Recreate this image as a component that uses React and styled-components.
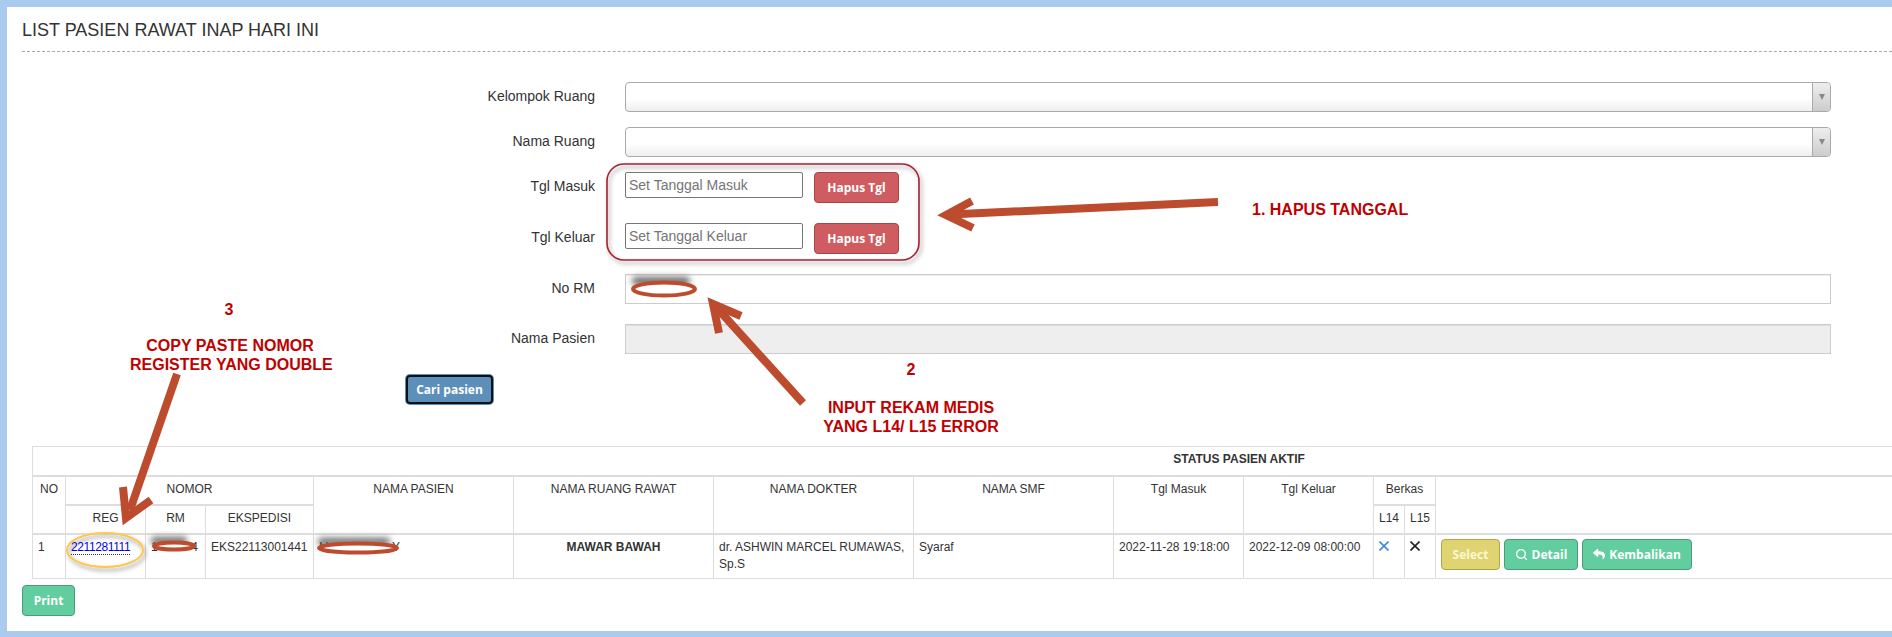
import React from "react";
import styled, { createGlobalStyle } from "styled-components";
import { Search } from "lucide-react";
import { FaReply } from "react-icons/fa";

const GlobalStyle = createGlobalStyle`
  html, body {
    margin: 0;
    padding: 0;
    overflow: hidden;
    background: #abcbee;
  }
  * {
    box-sizing: border-box;
  }
`;

const Page = styled.div`
  position: relative;
  width: 1892px;
  height: 637px;
  padding: 7px 0 6px 7px;
  overflow: hidden;
  background: #abcbee;
  font-family: "Liberation Sans", Arial, sans-serif;
  color: #333;
`;

const Panel = styled.main`
  height: 100%;
  padding-left: 15px;
  overflow: hidden;
  background: #fff;
`;

const Title = styled.h3`
  margin: 0 0 30px;
  padding: 13px 0 11px;
  border-bottom: 1px dashed #aaa;
  font-size: 18px;
  line-height: 20px;
  font-weight: 400;
  color: #333;
`;

const Form = styled.form`
  display: flex;
  flex-direction: column;
`;

const Row = styled.div`
  display: grid;
  grid-template-columns: 573px 1206px;
  column-gap: 30px;
  margin-bottom: ${(p) => p.$gap}px;
`;

const Label = styled.label`
  padding-top: 4px;
  font-size: 14px;
  line-height: 20px;
  text-align: right;
  color: #333;
`;

const SelectBox = styled.div`
  display: flex;
  justify-content: flex-end;
  height: 30px;
  border: 1px solid #aaa;
  border-radius: 4px;
  background: linear-gradient(to bottom, #fff 0%, #fff 55%, #eee 100%);
`;

const SelectArrow = styled.span`
  display: flex;
  align-items: center;
  justify-content: center;
  width: 18px;
  border-left: 1px solid #aaa;
  border-radius: 0 4px 4px 0;
  background: linear-gradient(to bottom, #eee 0%, #ccc 100%);

  &::after {
    content: "";
    border-left: 3px solid transparent;
    border-right: 3px solid transparent;
    border-top: 6px solid #888;
  }
`;

const DateRow = styled.div`
  display: flex;
  align-items: flex-start;
  gap: 11px;
`;

const DateInput = styled.input`
  width: 178px;
  height: 26px;
  padding: 0 3px;
  border: 1px solid #767676;
  border-radius: 2px;
  background: #fff;
  font-family: "Liberation Sans", Arial, sans-serif;
  font-size: 14px;

  &::placeholder {
    color: #757575;
    opacity: 1;
  }
`;

const TextInput = styled.input`
  display: block;
  width: 100%;
  height: 30px;
  border: 1px solid #ccc;
  background: ${(p) => (p.disabled ? "#eee" : "#fff")};
  box-shadow: inset 0 1px 1px rgba(0, 0, 0, 0.075);
`;

const tones = {
  red: ["#cf5c60", "#a94447", "#fff"],
  green: ["#62cd9f", "#4a9c79", "#fff"],
  yellow: ["#e0d371", "#b0a54f", "#fbf7d5"],
};

const Btn = styled.button`
  display: inline-flex;
  align-items: center;
  justify-content: center;
  gap: 4px;
  width: ${(p) => p.$width}px;
  height: 31px;
  padding: 0;
  border: 1px solid ${(p) => tones[p.$tone][1]};
  border-radius: 4px;
  background: ${(p) => tones[p.$tone][0]};
  color: ${(p) => tones[p.$tone][2]};
  font-family: "Open Sans", sans-serif;
  font-size: 12px;
  font-weight: 700;
`;

const CariButton = styled.button`
  align-self: flex-start;
  width: 87px;
  height: 29px;
  margin: 1px 0 42px 384px;
  padding: 0;
  border: 2px solid #111;
  border-radius: 4px;
  background: #5c8fba;
  box-shadow: 0 0 0 1px #5c8fba;
  color: #fff;
  font-family: "Open Sans", sans-serif;
  font-size: 12px;
  font-weight: 700;
`;

const Table = styled.table`
  table-layout: fixed;
  width: 2413px;
  margin-left: 10px;
  border-collapse: collapse;
  font-size: 12px;
  line-height: 17px;
  color: #333;
`;

const Th = styled.th`
  height: ${(p) => p.$height || 29}px;
  padding: 4px 5px;
  border: 1px solid #ddd;
  border-bottom-width: 2px;
  vertical-align: top;
  text-align: center;
  font-weight: ${(p) => (p.$bold ? 700 : 400)};
`;

const Td = styled.td`
  height: 45px;
  padding: 4px 5px;
  border: 1px solid #ddd;
  vertical-align: top;
  text-align: ${(p) => (p.$center ? "center" : "left")};
  font-weight: ${(p) => (p.$bold ? 700 : 400)};
`;

const RegLink = styled.a`
  border-bottom: 1px dotted #333;
  color: #0000ee;
  letter-spacing: -0.4px;
`;

// what is left readable of a value the screenshot has scribbled over
const Redacted = styled.div`
  display: flex;
  justify-content: space-between;
  width: ${(p) => p.$width}px;
`;

const Actions = styled.div`
  display: flex;
  gap: 4px;
`;

const CrossIcon = styled.svg`
  display: block;
  width: 10px;
  height: 10px;
  margin-top: 2px;
  stroke: ${(p) => p.$color};
  stroke-width: 1.6;
`;

const PrintRow = styled.div`
  margin-top: 6px;
`;

const Overlay = styled.svg`
  position: absolute;
  top: 0;
  left: 0;
  width: 1892px;
  height: 637px;
  pointer-events: none;
`;

const Callout = styled.div`
  position: absolute;
  top: ${(p) => p.$y}px;
  left: ${(p) => p.$x}px;
  width: ${(p) => p.$w}px;
  font-size: ${(p) => p.$size || 16}px;
  line-height: 19px;
  font-weight: 700;
  text-align: center;
  white-space: nowrap;
  color: #c00000;
  pointer-events: none;
`;

const Cross = ({ color }) => (
  <CrossIcon $color={color} viewBox="0 0 10 10" fill="none">
    <path d="M0.5 0.5L9.5 9.5M9.5 0.5L0.5 9.5" />
  </CrossIcon>
);

const Arrow = ({ shaft, head }) => (
  <g fill="none" stroke="#bd4b2e" strokeWidth="8" strokeMiterlimit="10">
    <path d={shaft} />
    <path d={head} />
  </g>
);

const Annotations = () => (
  <Overlay viewBox="0 0 1892 637">
    <defs>
      <filter id="soft" x="-30%" y="-60%" width="160%" height="220%">
        <feDropShadow dx="2" dy="3" stdDeviation="2" floodColor="#000" floodOpacity="0.4" />
      </filter>
      <filter id="smudge" x="-30%" y="-100%" width="160%" height="300%">
        <feGaussianBlur stdDeviation="3" />
      </filter>
    </defs>

    <rect x="607" y="164" width="312" height="96" rx="17" fill="none" stroke="#a5202f" strokeWidth="1.6" filter="url(#soft)" />
    <Arrow shaft="M1218 202L950 214.5" head="M972 201L946 215L973 228" />

    <rect x="632" y="277" width="58" height="8" rx="4" fill="#666" filter="url(#smudge)" />
    <ellipse cx="664" cy="289" rx="31" ry="6.5" fill="#fff" stroke="#bd4b2e" strokeWidth="4" />
    <Arrow shaft="M803 403L716 307" head="M741 316L713 304L719 333" />

    <Arrow shaft="M177 374L130 510" head="M123 487L126 518L151 500" />
    <ellipse cx="105" cy="550" rx="38" ry="17" fill="none" stroke="#fcc84f" strokeWidth="2" filter="url(#soft)" />

    <rect x="151" y="537" width="36" height="7" rx="3" fill="#666" filter="url(#smudge)" />
    <ellipse cx="174" cy="546" rx="20" ry="3.5" fill="#fff" stroke="#bd4b2e" strokeWidth="4" />

    <rect x="318" y="538" width="72" height="7" rx="3" fill="#666" filter="url(#smudge)" />
    <ellipse cx="358" cy="548" rx="39" ry="4.5" fill="#fff" stroke="#bd4b2e" strokeWidth="4" />
  </Overlay>
);

export default function App() {
  return (
    <Page>
      <GlobalStyle />
      <Panel>
        <Title>LIST PASIEN RAWAT INAP HARI INI</Title>
        <Form>
          <Row $gap={15}>
            <Label>Kelompok Ruang</Label>
            <SelectBox>
              <SelectArrow />
            </SelectBox>
          </Row>
          <Row $gap={15}>
            <Label>Nama Ruang</Label>
            <SelectBox>
              <SelectArrow />
            </SelectBox>
          </Row>
          <Row $gap={20}>
            <Label>Tgl Masuk</Label>
            <DateRow>
              <DateInput placeholder="Set Tanggal Masuk" />
              <Btn type="button" $tone="red" $width={85}>Hapus Tgl</Btn>
            </DateRow>
          </Row>
          <Row $gap={20}>
            <Label>Tgl Keluar</Label>
            <DateRow>
              <DateInput placeholder="Set Tanggal Keluar" />
              <Btn type="button" $tone="red" $width={85}>Hapus Tgl</Btn>
            </DateRow>
          </Row>
          <Row $gap={20}>
            <Label>No RM</Label>
            <TextInput />
          </Row>
          <Row $gap={20}>
            <Label>Nama Pasien</Label>
            <TextInput disabled />
          </Row>
          <CariButton type="button">Cari pasien</CariButton>
        </Form>

        <Table>
          <colgroup>
            {[33, 80, 60, 108, 200, 200, 200, 200, 130, 130, 31, 31, 1010].map((w, i) => (
              <col key={i} width={w} />
            ))}
          </colgroup>
          <thead>
            <tr>
              <Th colSpan={13} $bold>STATUS PASIEN AKTIF</Th>
            </tr>
            <tr>
              <Th rowSpan={2}>NO</Th>
              <Th colSpan={3}>NOMOR</Th>
              <Th rowSpan={2}>NAMA PASIEN</Th>
              <Th rowSpan={2}>NAMA RUANG RAWAT</Th>
              <Th rowSpan={2}>NAMA DOKTER</Th>
              <Th rowSpan={2}>NAMA SMF</Th>
              <Th rowSpan={2}>Tgl Masuk</Th>
              <Th rowSpan={2}>Tgl Keluar</Th>
              <Th colSpan={2}>Berkas</Th>
              <Th rowSpan={2} />
            </tr>
            <tr>
              <Th>REG</Th>
              <Th>RM</Th>
              <Th>EKSPEDISI</Th>
              <Th>L14</Th>
              <Th>L15</Th>
            </tr>
          </thead>
          <tbody>
            <tr>
              <Td>1</Td>
              <Td><RegLink>2211281111</RegLink></Td>
              <Td><Redacted $width={47}><span>1</span><span>4</span></Redacted></Td>
              <Td>EKS22113001441</Td>
              <Td><Redacted $width={81}><span>M</span><span>Y</span></Redacted></Td>
              <Td $center $bold>MAWAR BAWAH</Td>
              <Td>dr. ASHWIN MARCEL RUMAWAS, Sp.S</Td>
              <Td>Syaraf</Td>
              <Td>2022-11-28 19:18:00</Td>
              <Td>2022-12-09 08:00:00</Td>
              <Td><Cross color="#428bca" /></Td>
              <Td><Cross color="#222" /></Td>
              <Td>
                <Actions>
                  <Btn type="button" $tone="yellow" $width={59}>Select</Btn>
                  <Btn type="button" $tone="green" $width={74}>
                    <Search size={13} strokeWidth={2.5} />
                    Detail
                  </Btn>
                  <Btn type="button" $tone="green" $width={110}>
                    <FaReply size={12} />
                    Kembalikan
                  </Btn>
                </Actions>
              </Td>
            </tr>
          </tbody>
        </Table>

        <PrintRow>
          <Btn type="button" $tone="green" $width={53}>Print</Btn>
        </PrintRow>
      </Panel>

      <Annotations />
      <Callout $x={1252} $y={200} $w={155}>1. HAPUS TANGGAL</Callout>
      <Callout $x={891} $y={360} $w={40}>2</Callout>
      <Callout $x={811} $y={398} $w={200}>INPUT REKAM MEDIS<br />YANG L14/ L15 ERROR</Callout>
      <Callout $x={209} $y={300} $w={40}>3</Callout>
      <Callout $x={130} $y={336} $w={200}>COPY PASTE NOMOR<br />REGISTER YANG DOUBLE</Callout>
    </Page>
  );
}
